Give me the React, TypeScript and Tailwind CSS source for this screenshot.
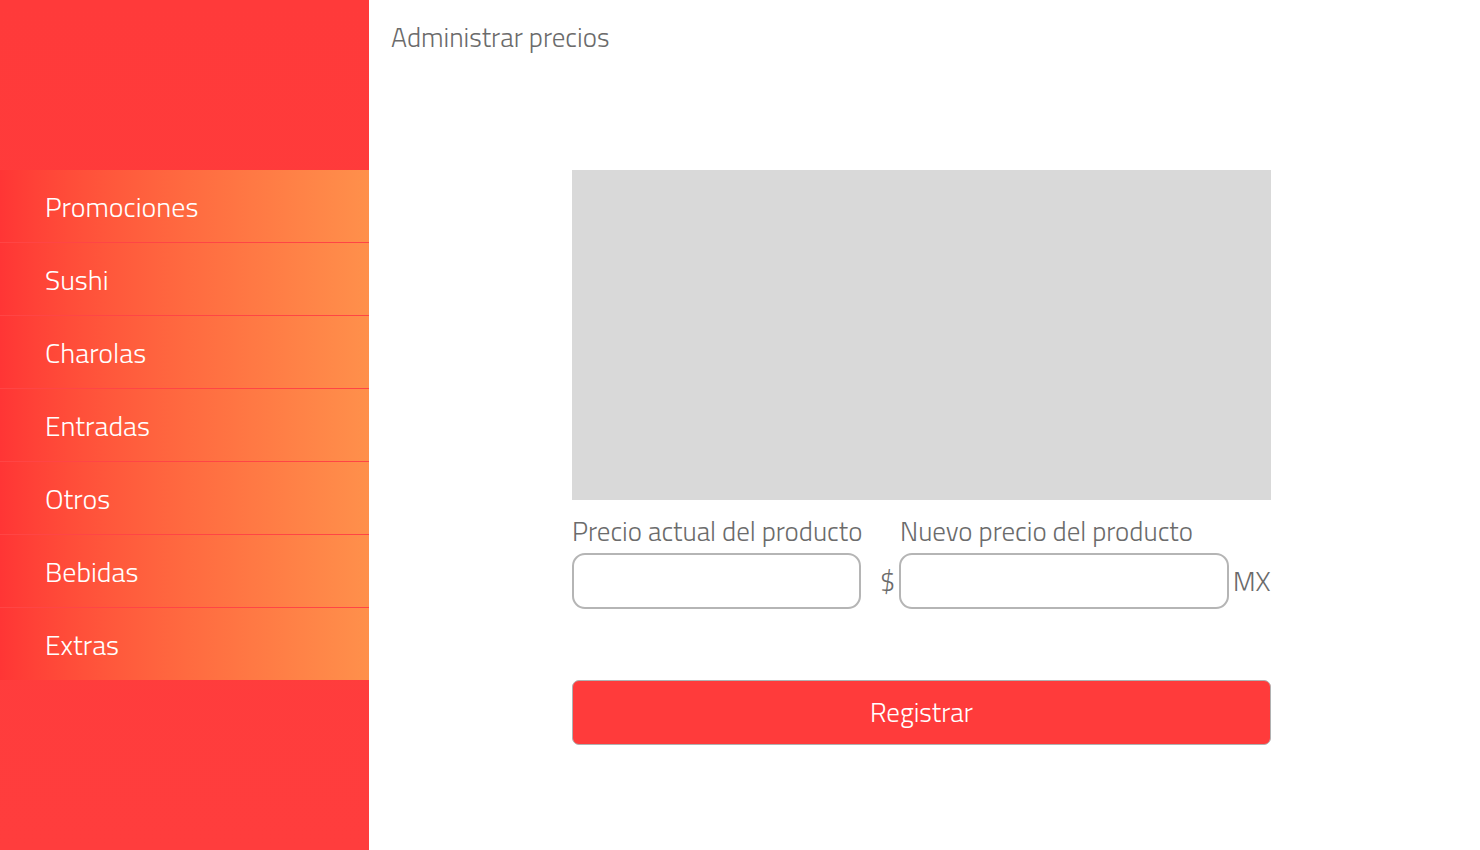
const categories = ['Promociones', 'Sushi', 'Charolas', 'Entradas', 'Otros', 'Bebidas', 'Extras'];

export default function App() {
  return (
    <div
      className="flex w-[1480px] h-[850px] bg-white overflow-hidden"
      style={{ fontFamily: '"Titillium Web", Roboto, "Open Sans", sans-serif' }}
    >
      <aside className="w-[369px] shrink-0 flex flex-col bg-gradient-to-b from-[#ff3a3a] to-[#ff3d3d]">
        <div className="h-[170px]" />
        <nav className="flex flex-col">
          {categories.map((c) => (
            <div
              key={c}
              className="h-[73px] last:h-[72px] flex items-center pl-[45px] pt-[2px] border-b border-[#ff4545] last:border-b-0 bg-gradient-to-r from-[#ff3535] to-[#ff904b] text-white text-[28px] font-light"
            >
              {c}
            </div>
          ))}
        </nav>
        <div className="flex-1" />
      </aside>

      <main className="flex-1 flex flex-col">
        <h1 className="pl-[22px] pt-[20px] text-[27px] font-light text-[#6b6b6b] leading-[34px]">
          Administrar precios
        </h1>

        <div className="ml-[203px] mt-[116px] w-[699px] flex flex-col">
          <div className="h-[330px] bg-[#d9d9d9]" />

          <div className="flex mt-[14px] text-[27px] font-light text-[#6b6b6b] leading-[34px]">
            <div className="w-[328px]">Precio actual del producto</div>
            <div>Nuevo precio del producto</div>
          </div>

          <div className="flex items-center mt-[5px] text-[27px] font-light text-[#6b6b6b]">
            <div className="w-[289px] h-[56px] rounded-[13px] border-2 border-[#b5b5b5] bg-white" />
            <span className="ml-[19px] w-[19px]">$</span>
            <div className="w-[330px] h-[56px] rounded-[13px] border-2 border-[#b5b5b5] bg-white" />
            <span className="ml-[4px]">MX</span>
          </div>

          <button className="mt-[71px] h-[65px] rounded-[7px] border border-[#b0b0b0] bg-[#ff3b3b] text-white text-[27px] font-light">
            Registrar
          </button>
        </div>
      </main>
    </div>
  );
}
